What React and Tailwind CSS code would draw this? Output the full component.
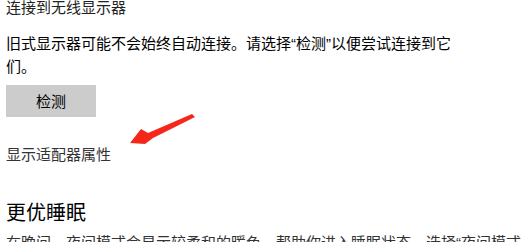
import React from 'react';

function RedArrow() {
  return (
    <svg className="absolute left-[120px] top-[105px]" width="85" height="45" viewBox="0 0 85 45">
      <polygon points="10,38 21,24 28,28 72,9 75,12 33,33 25,39" fill="#f5271b" />
    </svg>
  );
}

// narrow quotes like Microsoft YaHei
const Q = ({ children }) => <span className="font-['Liberation_Sans',sans-serif]">{children}</span>;

export default function App() {
  return (
    <div className="relative w-[521px] h-[242px] overflow-hidden bg-white text-black font-['Noto_Sans_CJK_SC','Microsoft_YaHei',sans-serif]">
      <div className="flex flex-col items-start px-[6px] -mt-[3px]">
        <p className="text-[15px] leading-[20px] text-[#222]">连接到无线显示器</p>
        <p className="mt-[15px] w-[450px] text-[15px] leading-[22px] text-black">
          旧式显示器可能不会始终自动连接。请选择<Q>“</Q>检测<Q>”</Q>以便尝试连接到它们。
        </p>
        <button className="mt-[8px] w-[90px] h-[32px] bg-[#cccccc] text-[15px] text-black">检测</button>
        <p className="mt-[26px] text-[15px] leading-[22px] text-[#333]">显示适配器属性</p>
        <h2 className="mt-[33px] text-[20px] leading-[28px] text-black">更优睡眠</h2>
        <p className="mt-[5px] text-[15px] leading-[22px] text-[#333] whitespace-nowrap">
          在晚间，夜间模式会显示较柔和的暖色，帮助你进入睡眠状态。选择<Q>“</Q>夜间模式设置<Q>”</Q>以进行设置。
        </p>
      </div>
      <RedArrow />
    </div>
  );
}
